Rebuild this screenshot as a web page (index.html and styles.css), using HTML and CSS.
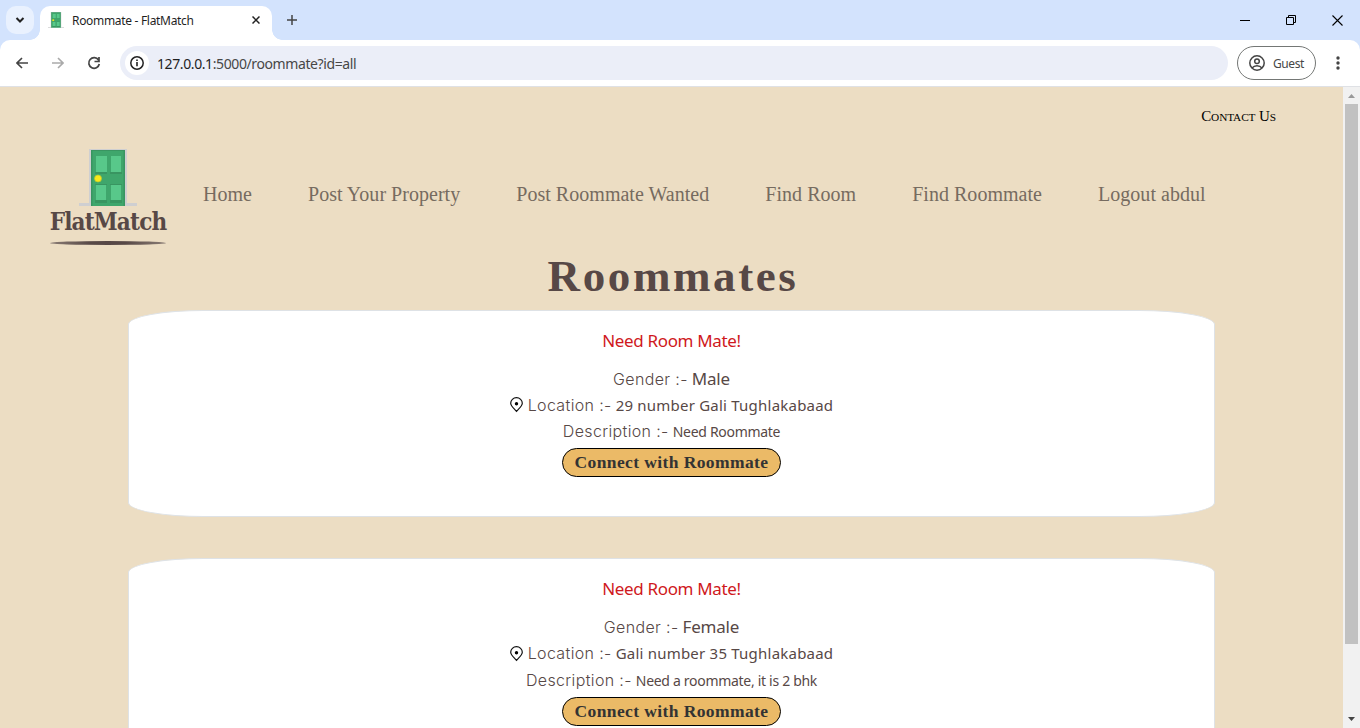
FILE: index.html
```html
<!DOCTYPE html>
<html lang="en">
<head>
<meta charset="utf-8">
<title>Roommate - FlatMatch</title>
<link rel="stylesheet" href="styles.css">
</head>
<body>
<svg width="0" height="0" class="defs">
  <symbol id="door" viewBox="0 0 58 58">
    <path fill="#cfcfd1" d="M0 54h10V0h38v54h10v3H0z"/>
    <path fill="#3fa66c" d="M12 1h34v56H12z"/>
    <path fill="#399561" d="M12 1h34v1H12zM12 2h1.500v55H12zM44.500 2H46v55h-1.500zM16 23h12v2H16zM31 23h12v2H31zM16 35h12v1H16zM31 35h12v1H31zM16 51h12v3H16zM31 51h12v3H31z"/>
    <path fill="#58c88a" d="M17 7h11v16H17zM32 7h10v16H32zM17 36h10v15H17zM32 36h10v15H32z"/>
    <circle cx="19" cy="29.500" r="3.500" fill="#f9ea1b" stroke="#b9c52e" stroke-width=".7"/>
  </symbol>
  <symbol id="pin" viewBox="0 0 13 16">
    <path d="M6.500 14.400C4.600 12.100.7 9.300.7 6.300a5.800 5.600 0 0 1 11.600 0c0 3-3.900 5.800-5.800 8.100z" fill="none" stroke="#111" stroke-width="1.200"/>
    <circle cx="6.500" cy="6.700" r="1.700" fill="#000"/>
  </symbol>
</svg>

<header class="tabs">
  <div class="tab-search"><svg width="10" height="8" viewBox="0 0 10 8"><path d="M1.500 2 5 5.500 8.500 2" fill="none" stroke="#222" stroke-width="2"/></svg></div>
  <div class="tab">
    <svg class="favicon" width="16" height="16"><use href="#door"/></svg>
    <span class="tab-title">Roommate - FlatMatch</span>
    <svg width="8" height="8" viewBox="0 0 8 8"><path d="M.5.5l7 7M7.500.5l-7 7" stroke="#222" stroke-width="1.500"/></svg>
  </div>
  <svg class="new-tab" width="10" height="10" viewBox="0 0 10 10"><path d="M0 5h10M5 0v10" stroke="#444" stroke-width="1.500"/></svg>
  <div class="window-buttons">
    <svg width="11" height="11" viewBox="0 0 11 11"><path d="M0 5.500h10" stroke="#000"/></svg>
    <svg width="11" height="11" viewBox="0 0 11 11"><path d="M.5 2.500h7v7h-7zM2.500 2.500v-2h7v7h-2" fill="none" stroke="#000"/></svg>
    <svg width="11" height="11" viewBox="0 0 11 11"><path d="M.5.5l10 10M10.500.5l-10 10" stroke="#000" stroke-width="1.100"/></svg>
  </div>
</header>

<div class="toolbar-wrap">
<div class="toolbar">
  <svg width="12" height="12" viewBox="0 0 12 12"><path d="M12 6H1M6 1 1 6l5 5" fill="none" stroke="#444" stroke-width="1.600"/></svg>
  <svg width="12" height="12" viewBox="0 0 12 12"><path d="M0 6h11M6 1l5 5-5 5" fill="none" stroke="#aaa" stroke-width="1.600"/></svg>
  <svg width="14" height="14" viewBox="0 0 14 14"><path d="M11.500 4A5.300 5.300 0 1 0 12.300 8M12 1v4.500H7.500" fill="none" stroke="#444" stroke-width="1.700"/></svg>
  <div class="address">
    <span class="site-info"><svg width="14" height="14" viewBox="0 0 14 14"><circle cx="7" cy="7" r="6.200" fill="none" stroke="#222" stroke-width="1.500"/><path d="M7 6v4.300M7 3.500v1.600" stroke="#222" stroke-width="1.600"/></svg></span>
    <span class="url"><b>127.0.0.1</b>:5000/roommate?id=all</span>
  </div>
  <div class="profile">
    <svg width="16" height="16" viewBox="0 0 16 16" fill="none" stroke="#444" stroke-width="1.500"><circle cx="8" cy="8" r="7.200"/><circle cx="8" cy="6.300" r="2.300"/><path d="M3 13c2.500-3 7.500-3 10 0"/></svg>
    <span>Guest</span>
  </div>
  <svg class="more" width="4" height="14" viewBox="0 0 4 14" fill="#444"><circle cx="2" cy="2" r="1.700"/><circle cx="2" cy="7" r="1.700"/><circle cx="2" cy="12" r="1.700"/></svg>
</div>
</div>

<div class="viewport">
  <main class="page">
    <div class="contact"><span>C<small>ONTACT</small> U<small>S</small></span></div>
    <div class="site-head">
      <div class="logo">
        <svg width="58" height="58"><use href="#door"/></svg>
        <span class="brand">FlatMatch</span>
        <span class="brand-line"></span>
      </div>
      <nav class="nav">
        <span>Home</span><span>Post Your Property</span><span>Post Roommate Wanted</span><span>Find Room</span><span>Find Roommate</span><span>Logout abdul</span>
      </nav>
    </div>
    <h1 class="title">Roommates</h1>
    <section class="card">
      <h2 class="need">Need Room Mate!</h2>
      <p class="row"><span class="label">Gender :-</span><span class="value">Male</span></p>
      <p class="row"><svg class="pin" width="13" height="16"><use href="#pin"/></svg><span class="label">Location :-</span><span class="value place">29 number Gali Tughlakabaad</span></p>
      <p class="row"><span class="label">Description :-</span><span class="value note">Need Roommate</span></p>
      <button class="connect">Connect with Roommate</button>
    </section>
    <section class="card">
      <h2 class="need">Need Room Mate!</h2>
      <p class="row"><span class="label">Gender :-</span><span class="value">Female</span></p>
      <p class="row tall"><svg class="pin" width="13" height="16"><use href="#pin"/></svg><span class="label">Location :-</span><span class="value place">Gali number 35 Tughlakabaad</span></p>
      <p class="row"><span class="label">Description :-</span><span class="value note">Need a roommate, it is 2 bhk</span></p>
      <button class="connect">Connect with Roommate</button>
    </section>
  </main>
  <aside class="scrollbar">
    <svg width="7" height="4" viewBox="0 0 7 4"><path d="M0 4 3.500 0 7 4z" fill="#999"/></svg>
    <div class="thumb"></div>
    <svg class="down" width="7" height="4" viewBox="0 0 7 4"><path d="M0 0h7L3.500 4z" fill="#444"/></svg>
  </aside>
</div>
</body>
</html>
```
FILE: styles.css
```css
* { box-sizing: border-box; }
body { margin: 0; width: 1360px; height: 728px; overflow: hidden; font-family: "Noto Sans", sans-serif; display: flex; flex-direction: column; }
.defs { position: absolute; }
svg { display: block; flex: none; }

.tabs { height: 40px; flex: none; background: #d3e3fd; display: flex; align-items: center; padding-left: 6px; }
.tab-search { width: 28px; height: 28px; border-radius: 10px; background: #e9f1fe; display: flex; align-items: center; justify-content: center; }
.tab { position: relative; width: 232px; height: 34px; margin: 6px 0 0 6px; padding: 0 12px 6px 8px; border-radius: 10px 10px 0 0; background: #fff; display: flex; align-items: center; }
.tab::before, .tab::after { content: ""; position: absolute; bottom: 0; width: 10px; height: 10px; }
.tab::before { left: -10px; background: radial-gradient(circle at 0 0, transparent 9.500px, #fff 10px); }
.tab::after { right: -10px; background: radial-gradient(circle at 100% 0, transparent 9.500px, #fff 10px); }
.tab-title { flex: 1; margin-left: 8px; font-size: 12px; letter-spacing: -.31px; color: #1f1f1f; white-space: nowrap; }
.new-tab { margin-left: 15px; }
.window-buttons { margin-left: auto; display: flex; gap: 35px; padding-right: 17px; }

.toolbar-wrap { height: 47px; flex: none; background: #d3e3fd; }
.toolbar { height: 47px; background: #fff; border-bottom: 1px solid #dfe1e5; border-radius: 10px 10px 0 0; display: flex; align-items: center; padding: 0 20px 0 16px; }
.toolbar > svg:nth-child(2) { margin-left: 24px; }
.toolbar > svg:nth-child(3) { margin-left: 23px; }
.address { width: 1108px; height: 34px; margin-left: 19px; border-radius: 17px; background: #ebeef8; display: flex; align-items: center; padding-left: 5px; }
.site-info { width: 24px; height: 24px; border-radius: 50%; background: #fff; display: flex; align-items: center; justify-content: center; }
.url { margin-left: 8px; font-size: 14px; letter-spacing: -.4px; color: #474747; }
.url b { font-weight: 400; color: #1f1f1f; }
.profile { width: 79px; height: 34px; margin-left: 9px; border: 1px solid #747775; border-radius: 17px; display: flex; align-items: center; gap: 8px; padding-left: 11px; font-size: 12px; letter-spacing: -.4px; color: #474747; }
.more { margin-left: auto; }

.viewport { flex: 1; min-height: 0; display: flex; }
.page { width: 1343px; background: #ecddc3; overflow: hidden; color: #574846; }
.contact { height: 62px; padding: 19px 67px 0 0; text-align: right; font: 15px/20px "Liberation Serif", serif; letter-spacing: -.1px; color: #000; }
.contact small { font-size: 11.300px; }
.site-head { height: 101px; display: flex; padding-left: 50px; }
.logo { width: 116px; display: flex; flex-direction: column; align-items: center; }
.brand { font: bold 24px/30px "DejaVu Serif", serif; font-stretch: condensed; letter-spacing: -.85px; white-space: nowrap; }
.brand-line { width: 116px; height: 4px; margin-top: 4px; border-radius: 50%; background: linear-gradient(90deg, #8b7d75, #574846 35%, #574846 65%, #8b7d75); }
.nav { display: flex; gap: 56px; margin-left: 37px; padding-top: 34px; font: 20px/22px "Liberation Serif", serif; letter-spacing: .03px; color: #766b60; white-space: nowrap; }
.title { margin: 0; height: 60px; text-align: center; font: bold 45px/52px "Liberation Serif", serif; letter-spacing: 2.600px; text-indent: 3px; }
.card { width: 1087px; height: 207px; margin: 0 0 41px 128px; padding-top: 18px; background: #fff; border: 1px solid #dee2e6; border-radius: 7%; text-align: center; }
.need { margin: 0 0 13px; font-size: 17px; line-height: 24px; font-weight: 400; letter-spacing: -.35px; color: #cf1820; }
.row { margin: 0; height: 26px; display: flex; justify-content: center; align-items: baseline; line-height: 26px; white-space: nowrap; }
.row.tall { height: 27px; }
.pin { align-self: center; margin-right: 5px; }
.label { margin-right: 4px; font-family: Inter, sans-serif; font-weight: 300; font-size: 16px; letter-spacing: .35px; }
.value { font-size: 17px; letter-spacing: -.2px; }
.place { font-size: 15px; letter-spacing: .22px; line-height: 24px; }
.note { font-size: 14px; letter-spacing: -.3px; }
.connect { display: block; width: 219px; height: 29px; margin: 4px auto 0; padding: 0 0 2px; border: 1px solid #000; border-radius: 15px; background: #ebba67; color: #333; font: bold 17.500px/24px "Liberation Serif", serif; letter-spacing: .4px; white-space: nowrap; }

.scrollbar { width: 17px; background: #f1f1f1; display: flex; flex-direction: column; align-items: center; padding: 7px 0; }
.thumb { width: 13px; height: 540px; margin-top: 6px; background: #c1c1c1; }
.down { margin-top: auto; }
```
